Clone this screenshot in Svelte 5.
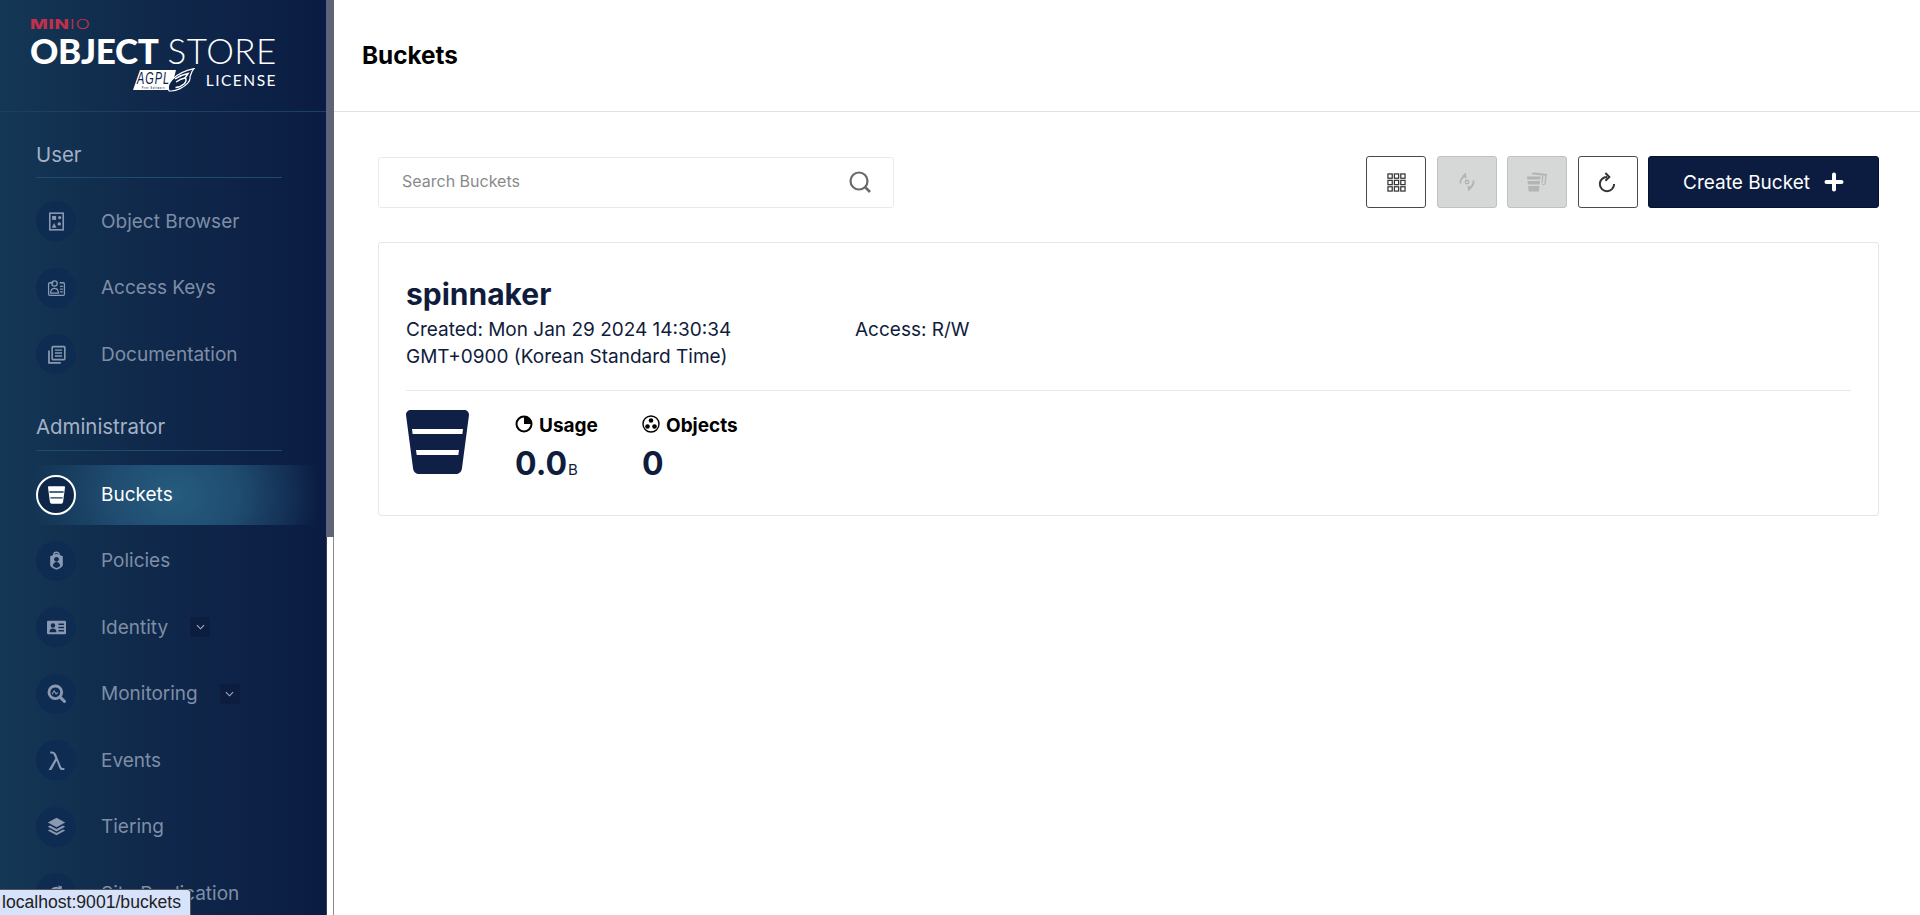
<script lang="ts">
  // Sidebar sections; `icon` is inner SVG markup drawn in a 24x24 box with currentColor.
  const icons: Record<string, string> = {
    browser: `<rect x="3.500" y="1.500" width="17" height="21" fill="none" stroke="currentColor" stroke-width="2"/><rect x="6.500" y="5" width="5" height="5" fill="currentColor"/><circle cx="16" cy="7" r="2" fill="currentColor"/><circle cx="15.500" cy="15" r="2.200" fill="currentColor"/><path d="M6 20l3-6 3 6z" fill="currentColor"/>`,
    keys: `<path d="M8 6H3.500A1.500 1.500 0 0 0 2 7.500v13A1.500 1.500 0 0 0 3.500 22h17a1.500 1.500 0 0 0 1.500-1.500v-13A1.500 1.500 0 0 0 20.500 6H16" fill="none" stroke="currentColor" stroke-width="1.600"/><circle cx="9.500" cy="7" r="3.400" fill="none" stroke="currentColor" stroke-width="1.600"/><path d="M4.500 19c.3-4 2.300-6 5-6s4.700 2 5 6z" fill="none" stroke="currentColor" stroke-width="1.600"/><path d="M16.500 10.500h3.500M16.500 14h3.500M16.500 17.500h3.500" stroke="currentColor" stroke-width="1.600"/>`,
    docs: `<path d="M2.500 7v15.500h15" fill="none" stroke="currentColor" stroke-width="2.200"/><rect x="6.500" y="2" width="16" height="16.500" rx="1" fill="none" stroke="currentColor" stroke-width="2"/><path d="M10 6.500h9M10 10.200h9M10 14h9" stroke="currentColor" stroke-width="1.800"/>`,
    policies: `<path d="M8.500 6V5a3.500 3.500 0 0 1 7 0v1" fill="none" stroke="currentColor" stroke-width="1.800"/><path d="M12 3.500l8 3v11c0 2.500-4 5-8 6-4-1-8-3.500-8-6v-11z" fill="currentColor"/><circle cx="12" cy="10.500" r="3" fill="#0e2c52"/><path d="M7.300 19c.4-3.500 2.200-5 4.700-5s4.300 1.500 4.700 5c-1.500 1.300-3 2-4.700 2.500-1.700-.5-3.200-1.200-4.700-2.500z" fill="#0e2c52"/>`,
    identity: `<rect x="0" y="3.500" width="24" height="17" rx="1.500" fill="currentColor"/><circle cx="7.500" cy="9.500" r="2.800" fill="#0e2c52"/><path d="M3 18c.3-3.500 2-4.800 4.500-4.800s4.200 1.300 4.500 4.800z" fill="#0e2c52"/><path d="M14.500 8h7M14.500 12h7M14.500 16h7" stroke="#0e2c52" stroke-width="1.800"/>`,
    monitoring: `<circle cx="10.500" cy="10.500" r="8" fill="none" stroke="currentColor" stroke-width="3.600"/><path d="M16.500 16.500l5.500 5.500" stroke="currentColor" stroke-width="3.800" stroke-linecap="round"/><path d="M6.500 13l2.500-4.500 2.500 4 2.500-2" fill="none" stroke="currentColor" stroke-width="1.400"/>`,
    events: `<path d="M2 24L10.400 9.500 8.800 5.500C8.200 4 7.300 3.200 5.500 3.200H4V.5h1.800c3 0 4.600 1.300 5.600 3.700l6.400 15.800c.5 1.200 1.200 1.600 2.700 1.600h1.500v2.700h-1.800c-2.600 0-3.900-1-4.800-3.300L12.100 12.300 5.600 24z" fill="currentColor"/>`,
    tiering: `<path d="M12 1l11 6-11 6L1 7z" fill="currentColor"/><path d="M3.800 10.700L1 12.200l11 6 11-6-2.800-1.500-8.200 4.500z" fill="currentColor"/><path d="M3.800 15.700L1 17.200l11 6 11-6-2.800-1.500-8.200 4.500z" fill="currentColor"/>`,
    replication: `<path d="M4 13a8 8 0 0 1 13-6.500M20 11a8 8 0 0 1-13 6.500" fill="none" stroke="currentColor" stroke-width="2.400"/><path d="M14 2l5 1-1 6zM10 22l-5-1 1-6z" fill="currentColor"/>`
  };

  const userItems = [
    { label: "Object Browser", icon: "browser" },
    { label: "Access Keys", icon: "keys" },
    { label: "Documentation", icon: "docs" }
  ];
  const adminItems = [
    { label: "Policies", icon: "policies" },
    { label: "Identity", icon: "identity", more: true },
    { label: "Monitoring", icon: "monitoring", more: true },
    { label: "Events", icon: "events" },
    { label: "Tiering", icon: "tiering" },
    { label: "Site Replication", icon: "replication" }
  ];
</script>

<div class="shell">
  <aside class="sidebar">
    <div class="brand">
      <div class="minio"><b>MIN</b><span>IO</span></div>
      <div class="product"><b>OBJECT</b> <span>STORE</span></div>
      <div class="license">
        <svg class="agpl" viewBox="0 0 64 24" width="64" height="24">
          <path d="M9 2H45L40 22H2z" fill="#fff"/>
          <text x="6" y="16" class="agpl-text" textLength="33" lengthAdjust="spacingAndGlyphs">AGPL</text>
          <text x="11" y="20.700" class="agpl-small" textLength="23" lengthAdjust="spacingAndGlyphs">Free Software</text>
          <path d="M38 22.800C35 16 43 5 63 .6c-3 3-2.500 5-4 8 .8 4-3 9-10 12-4 2-8 2.800-11 2.200z" fill="#0d2247" stroke="#fff" stroke-width="1.200"/>
          <path d="M44 11c4-3 8-4.500 13-5.500l-3 4.500c2 1 1 4-1 6-3 2.500-6 3.500-8.500 3.500" fill="none" stroke="#fff" stroke-width="1.500"/>
          <path d="M45 14c3-2 6-3.500 9-4" fill="none" stroke="#fff" stroke-width="1.300"/>
        </svg>
        <span>LICENSE</span>
      </div>
    </div>

    <nav class="menu">
      <h3>User</h3>
      {#each userItems as item}
        <div class="item">
          <span class="disc"><svg viewBox="0 0 24 24" width="19" height="19">{@html icons[item.icon]}</svg></span>
          <span>{item.label}</span>
        </div>
      {/each}

      <h3 class="admin">Administrator</h3>
      <div class="item active">
        <span class="disc">
          <svg viewBox="0 0 24 24" width="21" height="21">
            <path d="M3.500 2.500h17c.8 0 1.300.6 1.200 1.400l-2.200 16.800c-.1.900-.8 1.800-1.800 1.800H6.300c-1 0-1.700-.9-1.800-1.800L2.300 3.900c-.1-.8.400-1.400 1.200-1.400z" fill="currentColor"/>
            <path d="M3.800 8.400h16.400l-.2 1.500H4zM5 15h14l-.2 1.500H5.200z" fill="#14375a"/>
          </svg>
        </span>
        <span>Buckets</span>
      </div>
      {#each adminItems as item}
        <div class="item">
          <span class="disc"><svg viewBox="0 0 24 24" width="19" height="19">{@html icons[item.icon]}</svg></span>
          <span>{item.label}</span>
          {#if item.more}
            <span class="more">
              <svg viewBox="0 0 10 6" width="9" height="6"><path d="M1 1l4 4 4-4" fill="none" stroke="currentColor" stroke-width="1.200"/></svg>
            </span>
          {/if}
        </div>
      {/each}
    </nav>
  </aside>

  <div class="scrollbar"><div class="thumb"></div></div>

  <main class="main">
    <header class="page-head">
      <h1>Buckets</h1>
    </header>

    <section class="content">
      <div class="toolbar">
        <label class="search">
          <span class="placeholder">Search Buckets</span>
          <svg viewBox="0 0 24 24" width="24" height="24">
            <circle cx="11" cy="11" r="8.500" fill="none" stroke="#6a6a6a" stroke-width="2.200"/>
            <path d="M17 17l5 5" stroke="#6a6a6a" stroke-width="2.600"/>
          </svg>
        </label>

        <div class="actions">
          <button class="square" aria-label="Select multiple">
            <svg viewBox="0 0 20 20" width="19" height="19" fill="none" stroke="#333" stroke-width="1.300">
              <rect x="1" y="1" width="4.500" height="4.500"/><rect x="7.750" y="1" width="4.500" height="4.500"/><rect x="14.500" y="1" width="4.500" height="4.500"/>
              <rect x="1" y="7.750" width="4.500" height="4.500"/><rect x="7.750" y="7.750" width="4.500" height="4.500"/><rect x="14.500" y="7.750" width="4.500" height="4.500"/>
              <rect x="1" y="14.500" width="4.500" height="4.500"/><rect x="7.750" y="14.500" width="4.500" height="4.500"/><rect x="14.500" y="14.500" width="4.500" height="4.500"/>
            </svg>
          </button>
          <button class="square off" aria-label="Set replication">
            <svg viewBox="0 0 20 20" width="20" height="20" fill="none" stroke="#b4b4b4" stroke-width="1.800">
              <path d="M3.500 11.500A7 7 0 0 1 7 4.500M16.500 8.500A7 7 0 0 1 13 15.500"/>
              <path d="M9 .5L5 4l4.500 2.500zM11 19.500l4-3.500-4.500-2.500z" fill="#b4b4b4" stroke="none"/>
              <circle cx="10" cy="10" r="1.700" stroke-width="1.500"/>
            </svg>
          </button>
          <button class="square off" aria-label="Set lifecycle">
            <svg viewBox="0 0 22 20" width="22" height="20" fill="#b4b4b4">
              <path d="M1 4.500h13.500l-.3 3H1.300zM1.500 9h12.500l-.3 3.500H1.900zM2.100 14h11.400l-.6 5.500H2.700z"/>
              <path d="M5 1.500L8 .5l13 1.500-1.500 10.500-3.500 .8.800-1.200 1.500-.2 1-8.200L7 2.500z"/>
              <path d="M16 3.500l1.500.2-1 7.500-1 .2z"/>
            </svg>
          </button>
          <button class="square" aria-label="Refresh">
            <svg viewBox="0 0 20 20" width="21" height="21" fill="none" stroke="#333" stroke-width="1.900">
              <path d="M16.300 11.500A6.800 6.800 0 1 1 9.500 4.700"/>
              <path d="M8 1l3.700 3.700L8 8.400"/>
            </svg>
          </button>
          <button class="create">
            Create Bucket
            <svg viewBox="0 0 20 20" width="20" height="20"><path d="M10 2.500v15M2.500 10h15" stroke="#fff" stroke-width="4" stroke-linecap="round"/></svg>
          </button>
        </div>
      </div>

      <article class="card">
        <h2>spinnaker</h2>
        <div class="meta">
          <div class="created">Created: Mon Jan 29 2024 14:30:34 GMT+0900 (Korean Standard Time)</div>
          <div>Access: R/W</div>
        </div>
        <div class="stats">
          <svg class="bucket" viewBox="0 0 63 64" width="63" height="64">
            <path d="M5 0h53c3 0 5 2 5 5l-7 53c-.4 3.500-2.500 6-6 6H13c-3.500 0-5.600-2.500-6-6L0 5c0-3 2-5 5-5z" fill="#0f1f45"/>
            <path d="M6 19h51l-.6 5H6.600zM10 40h43l-.7 5H10.700z" fill="#fff"/>
          </svg>
          <div class="stat usage">
            <div class="stat-label">
              <svg viewBox="0 0 18 18" width="18" height="18">
                <circle cx="9" cy="9" r="7.500" fill="none" stroke="#000" stroke-width="2"/>
                <path d="M9 9V1.500A7.500 7.500 0 0 1 16.500 9z" fill="#000"/>
              </svg>
              Usage
            </div>
            <div class="stat-value">0.0<small>B</small></div>
          </div>
          <div class="stat">
            <div class="stat-label">
              <svg viewBox="0 0 18 18" width="18" height="18">
                <circle cx="9" cy="9" r="8" fill="none" stroke="#000" stroke-width="1.400"/>
                <circle cx="9" cy="5.500" r="2.300" fill="#000"/><circle cx="5.500" cy="11.500" r="2.300" fill="#000"/><circle cx="12.500" cy="11.500" r="2.300" fill="#000"/>
              </svg>
              Objects
            </div>
            <div class="stat-value">0</div>
          </div>
        </div>
      </article>
    </section>
  </main>

  <div class="status">localhost:9001/buckets</div>
</div>

<style>
  :global(body) {
    margin: 0;
    background: #fff;
  }
  .shell {
    display: flex;
    height: 915px;
    overflow: hidden;
    font-family: Inter, "Liberation Sans", sans-serif;
    color: #101c3c;
  }

  /* Sidebar */
  .sidebar {
    flex: 0 0 326px;
    height: 915px;
    overflow: hidden;
    background: linear-gradient(90deg, #143755 0%, #102a4c 40%, #0b1c42 100%);
    color: #fff;
  }
  .brand {
    box-sizing: border-box;
    height: 112px;
    padding: 17px 51px 0 30px;
    border-bottom: 1px solid #1c3f66;
    text-align: right;
  }
  .minio {
    text-align: left;
    font-size: 13px;
    line-height: 14px;
    letter-spacing: 0.5px;
    color: #c1304a;
    transform: scaleX(1.45);
    transform-origin: left;
  }
  .minio b {
    font-weight: 800;
  }
  .minio span {
    font-weight: 300;
  }
  .product {
    font-family: Lato, Inter, sans-serif;
    font-size: 35px;
    line-height: 35px;
    margin-top: 2px;
    white-space: nowrap;
    text-align: left;
  }
  .product b {
    font-weight: 900;
    letter-spacing: -0.3px;
  }
  .product span {
    font-weight: 300;
    letter-spacing: 0.5px;
  }
  .license {
    display: flex;
    justify-content: flex-end;
    align-items: center;
    gap: 11px;
    margin-right: -2px;
    font-family: Lato, Inter, sans-serif;
    font-size: 15.500px;
    letter-spacing: 1.500px;
  }
  .agpl-text {
    font: italic 400 17px "Liberation Sans", sans-serif;
    fill: #0d2247;
  }
  .agpl-small {
    font: 700 4px "Liberation Sans", sans-serif;
    fill: #0d2247;
  }

  .menu {
    padding: 0 0 0 36px;
  }
  h3 {
    margin: 28px 44px 10px 0;
    padding-bottom: 7px;
    border-bottom: 1px solid #1f4a72;
    font-size: 20.400px;
    line-height: 30px;
    font-weight: 400;
    color: #a3b1c6;
  }
  h3.admin {
    margin-top: 24px;
    margin-bottom: 14px;
    padding-bottom: 8px;
  }
  .item {
    display: flex;
    align-items: center;
    height: 66.500px;
    font-size: 19px;
    color: #7e8ea6;
  }
  .disc {
    flex: none;
    box-sizing: border-box;
    width: 40px;
    height: 40px;
    margin-right: 25px;
    border-radius: 50%;
    display: flex;
    align-items: center;
    justify-content: center;
    background: #0e2c52;
    color: #8a99b0;
  }
  .item.active {
    height: 60px;
    margin: 0 6px 3px -6px;
    padding-left: 6px;
    color: #fff;
    background: radial-gradient(ellipse 145px 120px at 144px 50%, #265c7e 0%, #1f4c70 45%, rgba(14, 37, 72, 0) 100%);
  }
  .item.active .disc {
    background: #0e2748;
    border: 2px solid #fff;
    color: #fff;
  }
  .more {
    display: flex;
    align-items: center;
    justify-content: center;
    width: 20px;
    height: 20px;
    margin-left: 22px;
    border-radius: 2px;
    background: #0c1d40;
    color: #a3b1c6;
  }

  /* Window scrollbar between the sidebar and the page */
  .scrollbar {
    flex: 0 0 8px;
    box-sizing: border-box;
    height: 915px;
    background: #fff;
    border-right: 1px solid #8b8b8b;
    border-left: 1px solid #3a3f4c;
  }
  .thumb {
    height: 537px;
    margin: 0 -1px;
    background: #5f6579;
  }

  /* Page */
  .main {
    flex: 1;
    min-width: 0;
  }
  .page-head {
    box-sizing: border-box;
    height: 112px;
    padding: 0 28px 1px;
    display: flex;
    align-items: center;
    border-bottom: 1px solid #e2e2e2;
  }
  h1 {
    margin: 0;
    font-size: 24.300px;
    font-weight: 700;
    color: #000;
  }
  .content {
    padding: 44px 41px 0 44px;
  }
  .toolbar {
    display: flex;
    justify-content: space-between;
    align-items: center;
  }
  .search {
    box-sizing: border-box;
    width: 516px;
    height: 51px;
    padding: 0 21px 3px 23px;
    display: flex;
    align-items: center;
    justify-content: space-between;
    border: 1px solid #eaeaea;
    border-radius: 3px;
    font-size: 16px;
    color: #8a8a8a;
  }
  .search svg {
    margin: 3px 0 0;
  }
  .actions {
    display: flex;
    gap: 10.500px;
  }
  .actions button {
    box-sizing: border-box;
    height: 52px;
    border-radius: 3px;
    font-family: inherit;
    padding: 0;
    display: flex;
    align-items: center;
    justify-content: center;
  }
  .square {
    width: 60px;
    background: #fff;
    border: 1px solid #4a4a4a;
  }
  .square.off {
    background: #d6d7d7;
    border-color: #c0c1c1;
  }
  .create {
    width: 231px;
    gap: 14px;
    background: #0c1c40;
    border: 1px solid #071231;
    color: #fff;
    font-size: 19px;
    font-weight: 400;
  }

  .card {
    box-sizing: border-box;
    height: 274px;
    margin-top: 34px;
    padding: 32px 27px 0;
    border: 1px solid #e6e6e6;
    border-radius: 3px;
  }
  h2 {
    margin: 0;
    font-size: 30px;
    line-height: 38px;
    font-weight: 700;
    color: #101c3c;
  }
  .meta {
    display: flex;
    gap: 119px;
    margin-top: 3px;
    padding-bottom: 20px;
    border-bottom: 1px solid #eaeaea;
    font-size: 19px;
    line-height: 27px;
  }
  .created {
    width: 330px;
  }
  .stats {
    display: flex;
    margin-top: 19px;
  }
  .bucket {
    margin-right: 46px;
  }
  .stat {
    padding-top: 5px;
  }
  .stat-label {
    display: flex;
    align-items: center;
    gap: 6px;
    font-size: 19px;
    font-weight: 700;
    line-height: 22px;
    color: #000;
  }
  .stat-label svg {
    margin-top: -5px;
  }
  .stat-value {
    margin-top: 5px;
    font-size: 32px;
    line-height: 44px;
    font-weight: 700;
  }
  .stat-value small {
    font-size: 15px;
    font-weight: 400;
    margin-left: 1px;
  }
  .usage {
    width: 127px;
  }

  /* Browser link preview in the corner */
  .status {
    position: fixed;
    left: 0;
    bottom: 0;
    height: 25px;
    padding: 0 9px 0 2px;
    display: flex;
    align-items: center;
    background: #d7e3fb;
    border-top: 1px solid #555;
    border-right: 1px solid #555;
    border-top-right-radius: 4px;
    font-family: "Liberation Sans", sans-serif;
    font-size: 17.600px;
    color: #222;
  }
</style>
